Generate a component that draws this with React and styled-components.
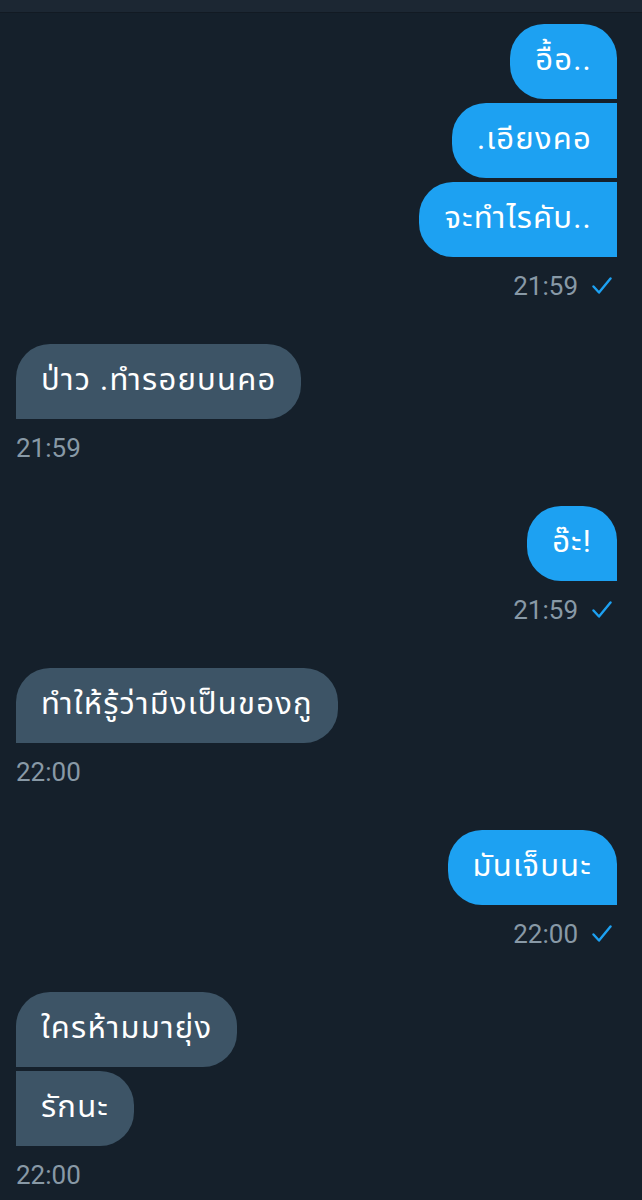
import React from "react";
import styled, { createGlobalStyle } from "styled-components";

const Global = createGlobalStyle`
  html, body { margin: 0; padding: 0; background: #15202b; }
  body { font-family: Roboto, "Noto Sans Thai", "Noto Sans", "DejaVu Sans", sans-serif; }
`;

const Screen = styled.div`
  width: 642px;
  min-height: 1200px;
  background: #15202b;
  display: flex;
  flex-direction: column;
  overflow: hidden;
`;

const TopBar = styled.div`
  height: 12px;
  background: #1c2733;
  border-bottom: 1px solid #121a23;
  flex-shrink: 0;
`;

const Thread = styled.div`
  display: flex;
  flex-direction: column;
  gap: 42px;
  padding: 11px 25px 0 16px;
`;

const Group = styled.div`
  display: flex;
  flex-direction: column;
  align-items: ${(p) => (p.$sent ? "flex-end" : "flex-start")};
  gap: 4px;
`;

const R = 34;

const Bubble = styled.div`
  height: 75px;
  box-sizing: border-box;
  display: flex;
  align-items: center;
  padding: 0 25px 2px;
  font-size: 31px;
  letter-spacing: 1.2px;
  color: #ffffff;
  white-space: nowrap;
  background: ${(p) => (p.$sent ? "#1da1f2" : "#3d5466")};
  border-radius: ${(p) =>
    p.$sent
      ? `${R}px ${p.$first ? R : 0}px 0 ${R}px`
      : `${p.$first ? R : 0}px ${R}px ${R}px 0`};
`;

const Meta = styled.div`
  display: flex;
  align-items: center;
  gap: 14px;
  margin-top: 9px;
  height: 32px;
  font-family: Roboto, sans-serif;
  font-size: 26px;
  color: #8899a6;
  padding-right: ${(p) => (p.$sent ? "5px" : "0")};
`;

const Check = () => (
  <svg width="20" height="18" viewBox="0 0 20 18" fill="none">
    <path d="M1.5 9.5 L7 15.5 L18.5 1.5" stroke="#1da1f2" strokeWidth="2.4" strokeLinecap="round" strokeLinejoin="round" />
  </svg>
);

const groups = [
  { sent: true, msgs: ["อื้อ..", ".เอียงคอ", "จะทำไรคับ.."], time: "21:59" },
  { sent: false, msgs: ["ป่าว .ทำรอยบนคอ"], time: "21:59" },
  { sent: true, msgs: ["อ๊ะ!"], time: "21:59" },
  { sent: false, msgs: ["ทำให้รู้ว่ามึงเป็นของกู"], time: "22:00" },
  { sent: true, msgs: ["มันเจ็บนะ"], time: "22:00" },
  { sent: false, msgs: ["ใครห้ามมายุ่ง", "รักนะ"], time: "22:00" },
];

export default function App() {
  return (
    <Screen>
      <Global />
      <TopBar />
      <Thread>
        {groups.map((g, i) => (
          <Group key={i} $sent={g.sent}>
            {g.msgs.map((m, j) => (
              <Bubble key={j} $sent={g.sent} $first={j === 0}>
                {m}
              </Bubble>
            ))}
            <Meta $sent={g.sent}>
              <span>{g.time}</span>
              {g.sent && <Check />}
            </Meta>
          </Group>
        ))}
      </Thread>
    </Screen>
  );
}
